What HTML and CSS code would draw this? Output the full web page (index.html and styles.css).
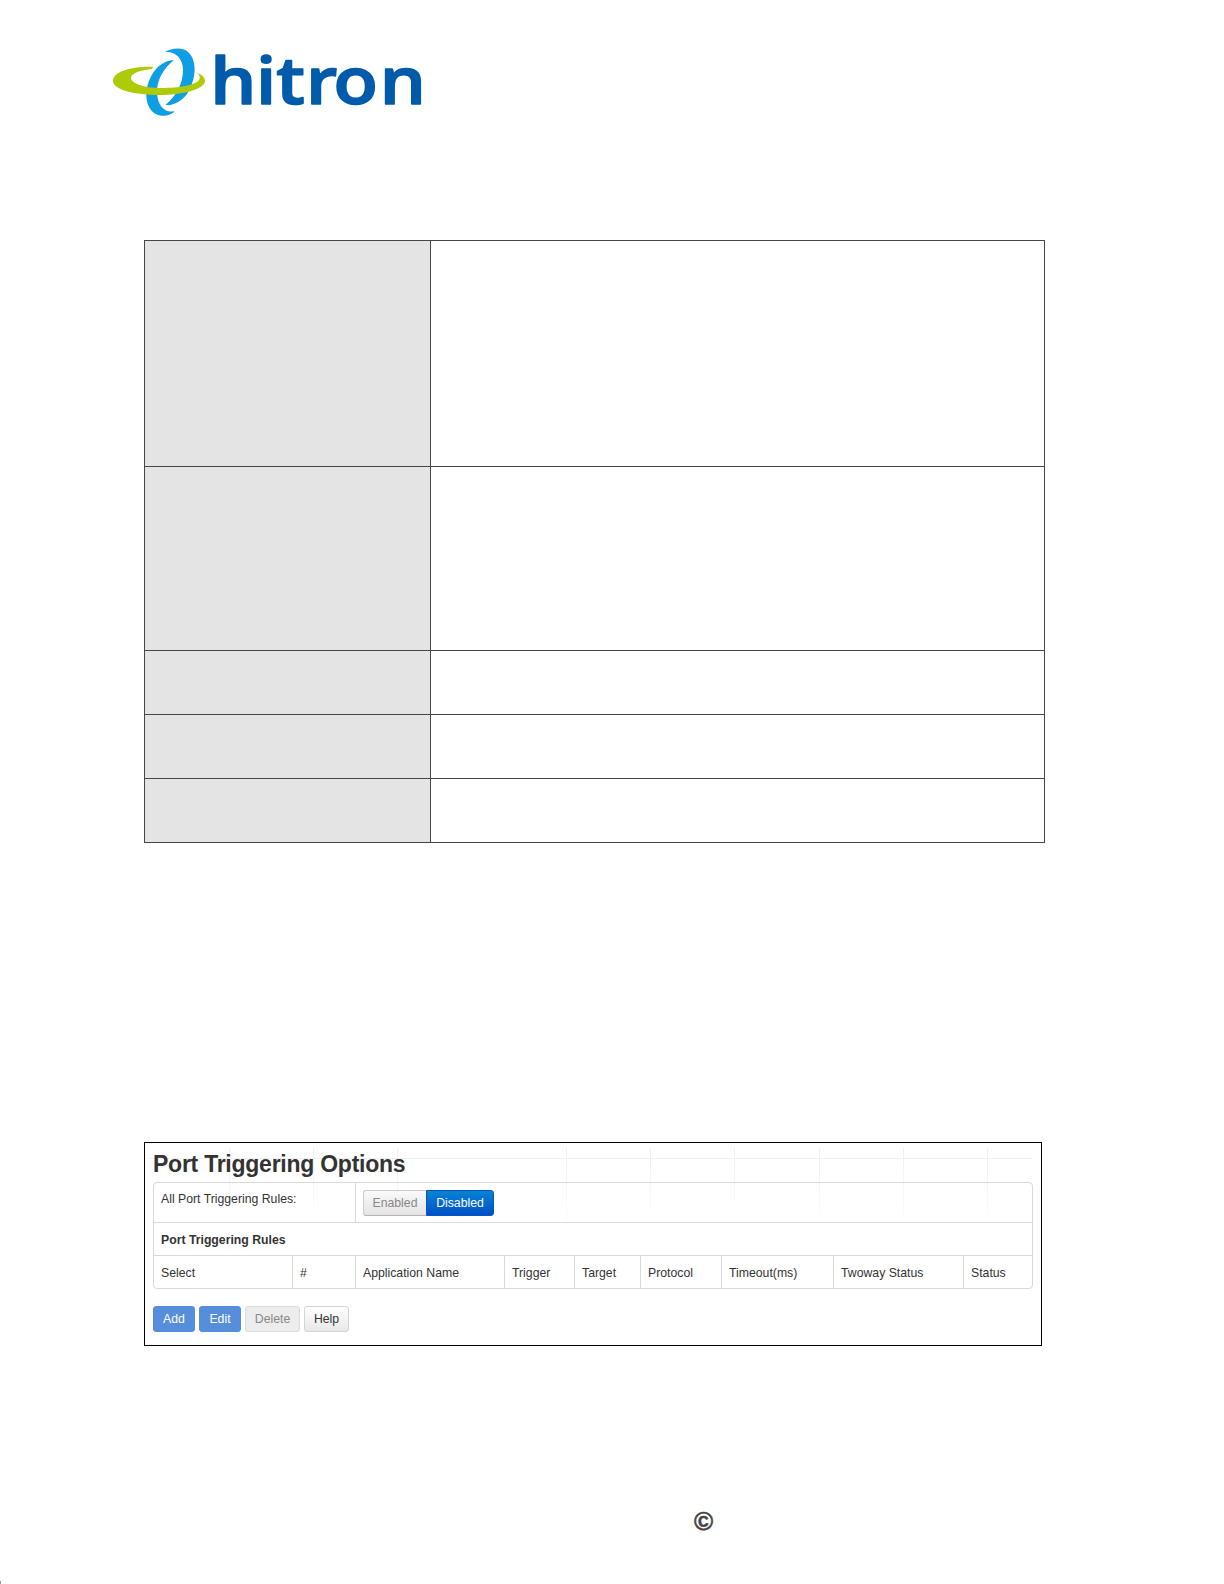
FILE: index.html
```html
<!DOCTYPE html>
<html lang="en">
<head>
  <meta charset="UTF-8">
  <meta name="viewport" content="width=device-width, initial-scale=1.0">
  <title>Port Triggering Options</title>
  <link rel="stylesheet" href="styles.css">
</head>
<body>
  <header>
    <svg class="logo" width="320" height="80" viewBox="0 0 320 80" role="img" aria-label="hitron">
      <!-- back ring -->
      <path fill="#0d9ee3" d="M52 4 C59 0 69 -1 75 4 C85 13 83 32 74 46 C69 53 60 58 52.500 57 C63 48 70 36 70 22 C70 10 62 3 52 4Z"/>
      <path fill="#0d9ee3" d="M61 12 C51 20 44 31 44 44 C44 56 51 66 62 63 C56 70 43 69 38 62 C29 50 34 29 46 18 C51 14 56 12 61 12Z"/>
      <!-- green orbit over it -->
      <path fill="#afcb08" d="M40 19 C22 18 0 23 0 33 C0 42 23 47 46 47 C70 47 92 41 92 33 C92 29 88 26 83 24.500 C86 26 88 29 86 32 C83 37 67 40 48 40 C30 40 18 35 18 30 C18 25 28 22 39 21Z"/>
      <text class="logo-text" transform="scale(1.1 1)" x="88.500 130 148.500 175.500 200.500 242.500" y="55.5">hitron</text>
    </svg>
  </header>

  <table class="info">
    <tr class="row-large"><th></th><td></td></tr>
    <tr class="row-medium"><th></th><td></td></tr>
    <tr><th></th><td></td></tr>
    <tr><th></th><td></td></tr>
    <tr><th></th><td></td></tr>
  </table>

  <section class="panel">
    <svg class="panel-grid" width="888" height="100" viewBox="0 0 888 100">
      <defs>
        <linearGradient id="fade" gradientUnits="userSpaceOnUse" x1="0" y1="0" x2="0" y2="96">
          <stop offset="0" stop-color="#eeeeee"/>
          <stop offset="1" stop-color="#ffffff"/>
        </linearGradient>
      </defs>
      <path stroke="#f1f1f1" d="M4 15.5H888"/>
      <path stroke="url(#fade)" d="M84.5 5V66M168.5 5V66M252.5 5V66M421.5 5V90M505.5 5V66M589.5 5V60M674.5 5V75M758.5 5V75M842.5 5V75"/>
    </svg>
    <h1>Port Triggering Options</h1>
    <div class="options">
      <div class="rules-toggle">
        <div class="label">All Port Triggering Rules:</div>
        <div class="toggle">
          <button class="btn btn-off">Enabled</button><button class="btn btn-on">Disabled</button>
        </div>
      </div>
      <div class="rules-title">Port Triggering Rules</div>
      <div class="rules-head">
        <div>Select</div>
        <div>#</div>
        <div>Application Name</div>
        <div>Trigger</div>
        <div>Target</div>
        <div>Protocol</div>
        <div>Timeout(ms)</div>
        <div>Twoway Status</div>
        <div>Status</div>
      </div>
    </div>
    <div class="actions">
      <button class="btn btn-primary">Add</button>
      <button class="btn btn-primary">Edit</button>
      <button class="btn btn-delete">Delete</button>
      <button class="btn btn-help">Help</button>
    </div>
  </section>

  <footer>&copy;</footer>
</body>
</html>
```
FILE: styles.css
```css
* {
  box-sizing: border-box;
}

body {
  margin: 0;
  width: 1224px;
  height: 1584px;
  overflow: hidden;
  background-color: #fff;
  font-family: "Liberation Sans", Arial, sans-serif;
  color: #333;
}

header {
  height: 240px;
  padding: 48px 0 0 113px;
}

.logo {
  display: block;
  overflow: visible;
}

.logo-text {
  font-family: "Open Sans", sans-serif;
  font-size: 66px;
  font-weight: 600;
  fill: #005baa;
  stroke: #005baa;
  stroke-width: 1.6px;
  stroke-linejoin: round;
}

.info {
  width: 901px;
  margin-left: 144px;
  table-layout: fixed;
  border-collapse: collapse;
}

.info tr {
  height: 64px;
}

.info .row-large {
  height: 226px;
}

.info .row-medium {
  height: 184px;
}

.info th,
.info td {
  padding: 0;
  border: 1px solid #464646;
}

.info th {
  width: 286px;
  background-color: #e4e4e4;
}

.panel {
  position: relative;
  width: 898px;
  height: 204px;
  margin: 299px 0 0 144px;
  padding: 0 8px;
  border: 1px solid #000;
}

.panel-grid {
  position: absolute;
  top: 0;
  left: 0;
}

.panel h1 {
  position: relative;
  margin: 0;
  padding-top: 7px;
  height: 39px;
  font-size: 23px;
  letter-spacing: -0.25px;
  line-height: 28px;
}

.options {
  position: relative;
  width: 880px;
  border: 1px solid #d9d9d9;
  border-radius: 4px;
  font-size: 12.25px;
}

.rules-toggle {
  display: grid;
  grid-template-columns: 201px 1fr;
  height: 39px;
}

.label {
  padding: 8px 7px;
  line-height: 16px;
}

.toggle {
  display: flex;
  padding: 7px;
  border-left: 1px solid #d9d9d9;
}

.rules-title {
  height: 33px;
  padding: 0 7px;
  border-top: 1px solid #d9d9d9;
  font-weight: bold;
  line-height: 34px;
}

.rules-head {
  display: grid;
  grid-template-columns: 138px 63px 149px 70px 66px 81px 112px 130px 1fr;
  height: 33px;
  border-top: 1px solid #d9d9d9;
  line-height: 34px;
}

.rules-head div {
  height: 32px;
  padding-left: 7px;
  white-space: nowrap;
}

.rules-head div + div {
  border-left: 1px solid #d9d9d9;
}

.btn {
  height: 26px;
  padding: 0;
  border: 1px solid #ccc;
  border-radius: 3px;
  font-family: inherit;
  font-size: 12.25px;
  color: #333;
}

.btn-off {
  width: 63px;
  border-right: none;
  border-radius: 3px 0 0 3px;
  background: linear-gradient(#fafafa, #e4e4e4);
  border-bottom-color: #b3b3b3;
  color: #888;
}

.btn-on {
  width: 68px;
  border-color: #0058c4;
  border-radius: 0 3px 3px 0;
  background: linear-gradient(#0783d2, #0050c8);
  color: #fff;
}

.actions {
  display: flex;
  gap: 4px;
  margin-top: 17px;
}

.btn-primary {
  width: 42px;
  border-color: #578edb;
  background-color: #578edb;
  color: #fff;
}

.btn-delete {
  width: 55px;
  border-color: #dcdcdc;
  background-color: #ededed;
  color: #888;
}

.btn-help {
  width: 45px;
  border-color: #d4d4d4;
  background: linear-gradient(#fff, #e8e8e8);
}

footer {
  position: relative;
  height: 238px;
  padding: 160px 0 0 694px;
  font-size: 26px;
  font-weight: bold;
  line-height: 30px;
  color: #444;
  -webkit-text-stroke: 0.5px #444;
}

/* page corner mark */
footer::after {
  content: "";
  position: absolute;
  left: 0;
  bottom: 0;
  width: 1px;
  height: 3px;
  background-color: #999;
}
```
